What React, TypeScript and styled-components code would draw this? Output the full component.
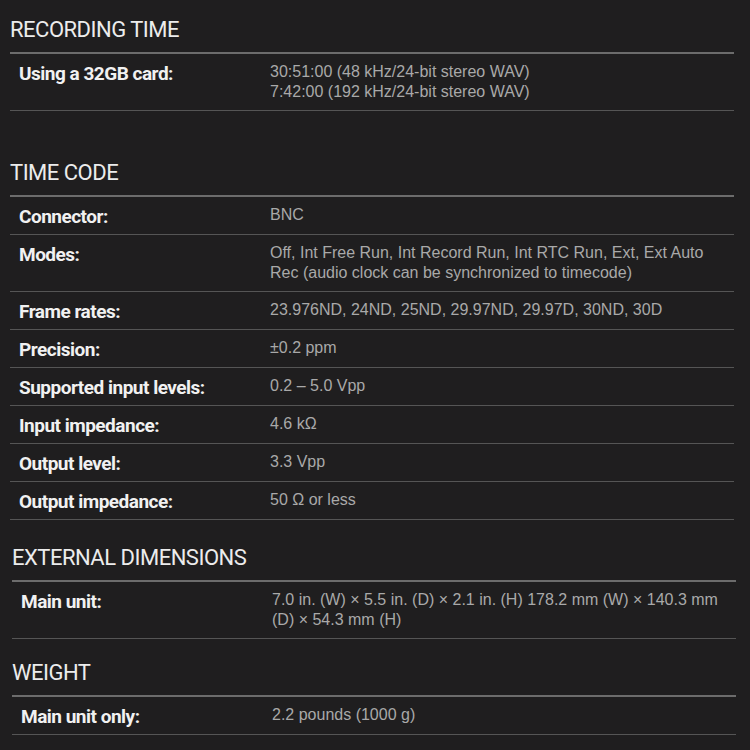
import React from "react";
import styled, { createGlobalStyle } from "styled-components";

const GlobalStyle = createGlobalStyle`
  html, body {
    margin: 0;
    padding: 0;
    background: #1f1e1f;
  }
  #root {
    min-height: 750px;
    background: #1f1e1f;
  }
`;

const Page = styled.div`
  display: flex;
  flex-direction: column;
  padding: 0 16px 0 10px;
  width: 750px;
  box-sizing: border-box;
`;

const Section = styled.section<{ $top: number; $shift: number }>`
  margin-top: ${(p) => p.$top}px;
  margin-left: ${(p) => p.$shift}px;
  margin-right: ${(p) => -p.$shift}px;
`;

const Heading = styled.h2`
  margin: 0;
  padding: 0 0 9px 0;
  font-family: Roboto, "Liberation Sans", sans-serif;
  font-weight: 400;
  font-size: 22px;
  line-height: 26px;
  letter-spacing: -0.5px;
  color: #ececec;
`;

const Table = styled.div`
  border-top: 2px solid #6c6c6c;
`;

const Row = styled.div`
  display: grid;
  grid-template-columns: 260px 1fr;
  border-bottom: 1px solid #555555;
`;

const Label = styled.div`
  padding: 10px 10px 7px 9px;
  font-family: Roboto, "Liberation Sans", sans-serif;
  font-weight: 700;
  font-size: 19px;
  line-height: 20px;
  letter-spacing: -0.5px;
  color: #f1f1f1;
`;

const Value = styled.div`
  padding: 8px 12px 8px 0;
  font-family: "Liberation Sans", Arial, sans-serif;
  font-size: 16px;
  line-height: 20px;
  color: #a9a9a9;
`;

type Spec = { label: string; value: React.ReactNode };
type SectionData = { title: string; top: number; shift: number; rows: Spec[] };

const sections: SectionData[] = [
  {
    title: "RECORDING TIME",
    top: 17,
    shift: 0,
    rows: [
      {
        label: "Using a 32GB card:",
        value: (
          <>
            30:51:00 (48 kHz/24-bit stereo WAV)
            <br />
            7:42:00 (192 kHz/24-bit stereo WAV)
          </>
        ),
      },
    ],
  },
  {
    title: "TIME CODE",
    top: 49,
    shift: 0,
    rows: [
      { label: "Connector:", value: "BNC" },
      {
        label: "Modes:",
        value:
          "Off, Int Free Run, Int Record Run, Int RTC Run, Ext, Ext Auto Rec (audio clock can be synchronized to timecode)",
      },
      { label: "Frame rates:", value: "23.976ND, 24ND, 25ND, 29.97ND, 29.97D, 30ND, 30D" },
      { label: "Precision:", value: "±0.2 ppm" },
      { label: "Supported input levels:", value: "0.2 – 5.0 Vpp" },
      { label: "Input impedance:", value: "4.6 kΩ" },
      { label: "Output level:", value: "3.3 Vpp" },
      { label: "Output impedance:", value: "50 Ω or less" },
    ],
  },
  {
    title: "EXTERNAL DIMENSIONS",
    top: 25,
    shift: 2,
    rows: [
      {
        label: "Main unit:",
        value: "7.0 in. (W) × 5.5 in. (D) × 2.1 in. (H) 178.2 mm (W) × 140.3 mm (D) × 54.3 mm (H)",
      },
    ],
  },
  {
    title: "WEIGHT",
    top: 21,
    shift: 2,
    rows: [{ label: "Main unit only:", value: "2.2 pounds (1000 g)" }],
  },
];

export default function App() {
  return (
    <>
      <GlobalStyle />
      <Page>
        {sections.map((s) => (
          <Section key={s.title} $top={s.top} $shift={s.shift}>
            <Heading>{s.title}</Heading>
            <Table>
              {s.rows.map((r) => (
                <Row key={r.label}>
                  <Label>{r.label}</Label>
                  <Value>{r.value}</Value>
                </Row>
              ))}
            </Table>
          </Section>
        ))}
      </Page>
    </>
  );
}
